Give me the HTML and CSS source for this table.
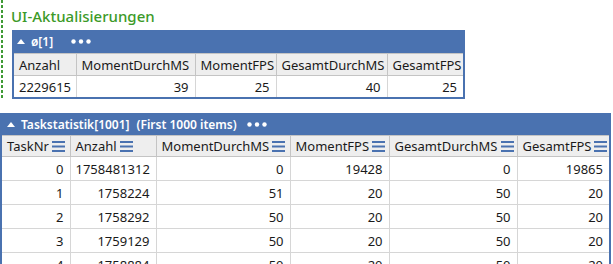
FILE: index.html
```html
<!DOCTYPE html>
<html lang="de">
<head>
  <meta charset="UTF-8">
  <meta name="viewport" content="width=device-width, initial-scale=1.0">
  <title>UI-Aktualisierungen</title>
  <link rel="stylesheet" href="styles.css">
</head>
<body>
  <!-- Bereich mit den UI-Werten -->
  <section class="panel">
    <h2 class="panel-title">UI-Aktualisierungen</h2>

    <div class="grid grid-ui">
      <div class="grid-bar">
        <svg class="toggle" width="8" height="5" viewBox="0 0 8 5"><path d="M0 5 L4 0 L8 5 Z" fill="#fff"/></svg>
        <span class="bar-title">ø[1]</span>
        <svg class="more" width="20" height="5" viewBox="0 0 20 5"><circle cx="2.5" cy="2.5" r="2.2" fill="#fff"/><circle cx="10" cy="2.5" r="2.2" fill="#fff"/><circle cx="17.5" cy="2.5" r="2.2" fill="#fff"/></svg>
      </div>
      <table>
        <colgroup>
          <col style="width:62px"><col style="width:119px"><col style="width:81px"><col style="width:111px"><col style="width:76px">
        </colgroup>
        <thead>
          <tr>
            <th>Anzahl</th>
            <th>MomentDurchMS</th>
            <th>MomentFPS</th>
            <th>GesamtDurchMS</th>
            <th>GesamtFPS</th>
          </tr>
        </thead>
        <tbody>
          <tr>
            <td class="left">2229615</td>
            <td>39</td>
            <td>25</td>
            <td>40</td>
            <td>25</td>
          </tr>
        </tbody>
      </table>
    </div>
  </section>

  <!-- Taskstatistik -->
  <div class="grid grid-tasks">
    <div class="grid-bar">
      <svg class="toggle" width="8" height="5" viewBox="0 0 8 5"><path d="M0 5 L4 0 L8 5 Z" fill="#fff"/></svg>
      <span class="bar-title">Taskstatistik[1001]</span>
      <span class="bar-title bar-note">(First 1000 items)</span>
      <svg class="more" width="20" height="5" viewBox="0 0 20 5"><circle cx="2.5" cy="2.5" r="2.2" fill="#fff"/><circle cx="10" cy="2.5" r="2.2" fill="#fff"/><circle cx="17.5" cy="2.5" r="2.2" fill="#fff"/></svg>
    </div>
    <table>
      <colgroup>
        <col style="width:68px"><col style="width:86px"><col style="width:134px"><col style="width:99px"><col style="width:128px"><col style="width:92px">
      </colgroup>
      <thead>
        <tr id="task-head"></tr>
      </thead>
      <tbody id="task-body"></tbody>
    </table>
  </div>

  <script>
    const spalten = ['TaskNr', 'Anzahl', 'MomentDurchMS', 'MomentFPS', 'GesamtDurchMS', 'GesamtFPS'];
    const zeilen = [
      [0, 1758481312, 0, 19428, 0, 19865],
      [1, 1758224, 51, 20, 50, 20],
      [2, 1758292, 50, 20, 50, 20],
      [3, 1759129, 50, 20, 50, 20],
      [4, 1758884, 50, 20, 50, 20]
    ];

    // Menü-Symbol im Spaltenkopf
    const menuIcon = '<svg class="col-menu" width="13" height="11" viewBox="0 0 13 11">' +
      '<rect x="0" y="0" width="13" height="2" fill="#4a72b0"/>' +
      '<rect x="0" y="4.5" width="13" height="2" fill="#4a72b0"/>' +
      '<rect x="0" y="9" width="13" height="2" fill="#4a72b0"/></svg>';

    const head = document.getElementById('task-head');
    spalten.forEach((name) => {
      const th = document.createElement('th');
      th.innerHTML = '<span class="th-inner"><span>' + name + '</span>' + menuIcon + '</span>';
      head.appendChild(th);
    });

    const body = document.getElementById('task-body');
    zeilen.forEach((werte) => {
      const tr = document.createElement('tr');
      werte.forEach((wert) => {
        const td = document.createElement('td');
        td.textContent = wert;
        tr.appendChild(td);
      });
      body.appendChild(tr);
    });
  </script>
</body>
</html>
```

FILE: styles.css
```css
body {
  margin: 0;
  font-family: "Noto Sans", "Open Sans", sans-serif;
  font-size: 13px;
  color: #1a1a1a;
  background: #fff;
  overflow: hidden;
}

.panel {
  padding: 4px 0 1px 12px;
  background: repeating-linear-gradient(to bottom, #3f9a35 0 3px, transparent 3px 5px) no-repeat 1px 0 / 2px 100%;
}

.panel-title {
  margin: 0 0 2px -1px;
  font-size: 15px;
  font-weight: 500;
  line-height: 24px;
  color: #3c9a28;
}

.grid {
  border: 2px solid #4a72b0;
  border-top: none;
  background: #fff;
}

.grid-ui {
  width: 449px;
}

.grid-tasks {
  width: 607px;
  margin-top: 13px;
}

.grid-bar {
  display: flex;
  align-items: center;
  gap: 6px;
  height: 23px;
  padding-left: 5px;
  margin: 0 -2px;
  background: #4a72b0;
  color: #fff;
  font-size: 12px;
  font-weight: 600;
}

.grid-tasks .grid-bar {
  height: 22px;
  padding-left: 7px;
}

.bar-title {
  white-space: nowrap;
}

.bar-note {
  margin-left: 1px;
}

.more {
  margin-left: 12px;
}

.grid-tasks .more {
  margin-left: 4px;
}

table {
  border-collapse: collapse;
  table-layout: fixed;
  width: 100%;
}

th, td {
  border: 1px solid #d6d6d6;
  padding: 0 6px 0 5px;
  white-space: nowrap;
  overflow: hidden;
}

th {
  background: #eeeeee;
  border-color: #c4c4c4;
  font-weight: normal;
  text-align: left;
  height: 21px;
}

td {
  text-align: right;
  height: 21px;
}

tr > :first-child {
  border-left: none;
}

tr > :last-child {
  border-right: none;
}

tbody tr:last-child td {
  border-bottom: none;
}

td.left {
  text-align: left;
}

.grid-tasks th {
  height: 20px;
}

.grid-tasks td {
  height: 23px;
}

.grid-tasks tbody tr:last-child td {
  border-bottom: 1px solid #d6d6d6;
}

.th-inner {
  display: flex;
  align-items: center;
  gap: 3px;
}

.col-menu {
  flex: none;
}
```
